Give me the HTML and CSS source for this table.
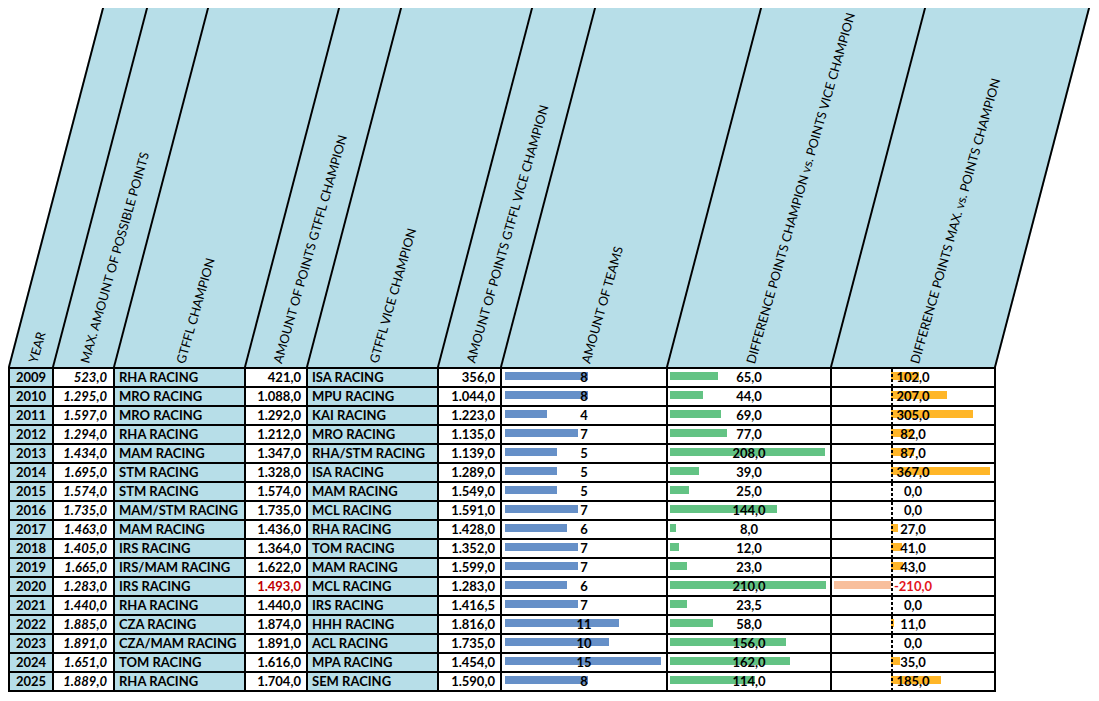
FILE: index.html
```html
<!DOCTYPE html>
<html>
<head>
<meta charset="utf-8">
<link rel="stylesheet" href="styles.css">
</head>
<body>
<div class="sheet">
  <div class="head">
    <div class="hc"><span>YEAR</span></div>
    <div class="hc"><span>MAX. AMOUNT OF POSSIBLE POINTS</span></div>
    <div class="hc"><span>GTFFL CHAMPION</span></div>
    <div class="hc"><span>AMOUNT OF POINTS GTFFL CHAMPION</span></div>
    <div class="hc"><span>GTFFL VICE CHAMPION</span></div>
    <div class="hc"><span>AMOUNT OF POINTS GTFFL VICE CHAMPION</span></div>
    <div class="hc"><span>AMOUNT OF TEAMS</span></div>
    <div class="hc"><span>DIFFERENCE POINTS CHAMPION vs. POINTS VICE CHAMPION</span></div>
    <div class="hc"><span>DIFFERENCE POINTS MAX. vs. POINTS CHAMPION</span></div>
  </div>
  <div class="grid">
    <div class="c yr">2009</div><div class="c mx">523,0</div><div class="c nm">RHA RACING</div><div class="c pt">421,0</div><div class="c nm">ISA RACING</div><div class="c pt">356,0</div><div class="c bt" style="--w:83px">8</div><div class="c bd" style="--w:48px">65,0</div><div class="c bm" style="--w:28px">102,0</div>
    <div class="c yr">2010</div><div class="c mx">1.295,0</div><div class="c nm">MRO RACING</div><div class="c pt">1.088,0</div><div class="c nm">MPU RACING</div><div class="c pt">1.044,0</div><div class="c bt" style="--w:83px">8</div><div class="c bd" style="--w:33px">44,0</div><div class="c bm" style="--w:56px">207,0</div>
    <div class="c yr">2011</div><div class="c mx">1.597,0</div><div class="c nm">MRO RACING</div><div class="c pt">1.292,0</div><div class="c nm">KAI RACING</div><div class="c pt">1.223,0</div><div class="c bt" style="--w:42px">4</div><div class="c bd" style="--w:51px">69,0</div><div class="c bm" style="--w:82px">305,0</div>
    <div class="c yr">2012</div><div class="c mx">1.294,0</div><div class="c nm">RHA RACING</div><div class="c pt">1.212,0</div><div class="c nm">MRO RACING</div><div class="c pt">1.135,0</div><div class="c bt" style="--w:73px">7</div><div class="c bd" style="--w:57px">77,0</div><div class="c bm" style="--w:22px">82,0</div>
    <div class="c yr">2013</div><div class="c mx">1.434,0</div><div class="c nm">MAM RACING</div><div class="c pt">1.347,0</div><div class="c nm">RHA/STM RACING</div><div class="c pt">1.139,0</div><div class="c bt" style="--w:52px">5</div><div class="c bd" style="--w:155px">208,0</div><div class="c bm" style="--w:23px">87,0</div>
    <div class="c yr">2014</div><div class="c mx">1.695,0</div><div class="c nm">STM RACING</div><div class="c pt">1.328,0</div><div class="c nm">ISA RACING</div><div class="c pt">1.289,0</div><div class="c bt" style="--w:52px">5</div><div class="c bd" style="--w:29px">39,0</div><div class="c bm" style="--w:99px">367,0</div>
    <div class="c yr">2015</div><div class="c mx">1.574,0</div><div class="c nm">STM RACING</div><div class="c pt">1.574,0</div><div class="c nm">MAM RACING</div><div class="c pt">1.549,0</div><div class="c bt" style="--w:52px">5</div><div class="c bd" style="--w:19px">25,0</div><div class="c bm" style="--w:0px">0,0</div>
    <div class="c yr">2016</div><div class="c mx">1.735,0</div><div class="c nm">MAM/STM RACING</div><div class="c pt">1.735,0</div><div class="c nm">MCL RACING</div><div class="c pt">1.591,0</div><div class="c bt" style="--w:73px">7</div><div class="c bd" style="--w:107px">144,0</div><div class="c bm" style="--w:0px">0,0</div>
    <div class="c yr">2017</div><div class="c mx">1.463,0</div><div class="c nm">MAM RACING</div><div class="c pt">1.436,0</div><div class="c nm">RHA RACING</div><div class="c pt">1.428,0</div><div class="c bt" style="--w:62px">6</div><div class="c bd" style="--w:6px">8,0</div><div class="c bm" style="--w:7px">27,0</div>
    <div class="c yr">2018</div><div class="c mx">1.405,0</div><div class="c nm">IRS RACING</div><div class="c pt">1.364,0</div><div class="c nm">TOM RACING</div><div class="c pt">1.352,0</div><div class="c bt" style="--w:73px">7</div><div class="c bd" style="--w:9px">12,0</div><div class="c bm" style="--w:11px">41,0</div>
    <div class="c yr">2019</div><div class="c mx">1.665,0</div><div class="c nm">IRS/MAM RACING</div><div class="c pt">1.622,0</div><div class="c nm">MAM RACING</div><div class="c pt">1.599,0</div><div class="c bt" style="--w:73px">7</div><div class="c bd" style="--w:17px">23,0</div><div class="c bm" style="--w:12px">43,0</div>
    <div class="c yr">2020</div><div class="c mx">1.283,0</div><div class="c nm">IRS RACING</div><div class="c pt red">1.493,0</div><div class="c nm">MCL RACING</div><div class="c pt">1.283,0</div><div class="c bt" style="--w:62px">6</div><div class="c bd" style="--w:156px">210,0</div><div class="c bm neg" style="--w:57px">-210,0</div>
    <div class="c yr">2021</div><div class="c mx">1.440,0</div><div class="c nm">RHA RACING</div><div class="c pt">1.440,0</div><div class="c nm">IRS RACING</div><div class="c pt">1.416,5</div><div class="c bt" style="--w:73px">7</div><div class="c bd" style="--w:17px">23,5</div><div class="c bm" style="--w:0px">0,0</div>
    <div class="c yr">2022</div><div class="c mx">1.885,0</div><div class="c nm">CZA RACING</div><div class="c pt">1.874,0</div><div class="c nm">HHH RACING</div><div class="c pt">1.816,0</div><div class="c bt" style="--w:114px">11</div><div class="c bd" style="--w:43px">58,0</div><div class="c bm" style="--w:3px">11,0</div>
    <div class="c yr">2023</div><div class="c mx">1.891,0</div><div class="c nm">CZA/MAM RACING</div><div class="c pt">1.891,0</div><div class="c nm">ACL RACING</div><div class="c pt">1.735,0</div><div class="c bt" style="--w:104px">10</div><div class="c bd" style="--w:116px">156,0</div><div class="c bm" style="--w:0px">0,0</div>
    <div class="c yr">2024</div><div class="c mx">1.651,0</div><div class="c nm">TOM RACING</div><div class="c pt">1.616,0</div><div class="c nm">MPA RACING</div><div class="c pt">1.454,0</div><div class="c bt" style="--w:156px">15</div><div class="c bd" style="--w:120px">162,0</div><div class="c bm" style="--w:9px">35,0</div>
    <div class="c yr">2025</div><div class="c mx">1.889,0</div><div class="c nm">RHA RACING</div><div class="c pt">1.704,0</div><div class="c nm">SEM RACING</div><div class="c pt">1.590,0</div><div class="c bt" style="--w:83px">8</div><div class="c bd" style="--w:85px">114,0</div><div class="c bm" style="--w:50px">185,0</div>
  </div>
</div>
</body>
</html>
```
FILE: styles.css
```css
* { box-sizing: border-box; }
body {
  margin: 0;
  background: #fff;
  color: #000;
  font-family: "Lato", "Liberation Sans", sans-serif;
}
.sheet {
  width: 1099px;
  padding: 8px 0 0 8px;
}
.head, .grid {
  display: grid;
  grid-template-columns: 44px 61px 131px 62px 131px 63px 166px 164px 164px;
  width: 988px;
  border-left: 2px solid #000;
}
.head {
  height: 359px;
  grid-template-rows: 359px;
  background: #b7dee8;
  transform: skewX(-14.68deg);
  transform-origin: 0 100%;
}
.hc {
  min-height: 0;
  border-right: 2px solid #000;
  display: flex;
  flex-direction: column;
  justify-content: flex-end;
  align-items: center;
  padding-bottom: 4px;
}
.hc span {
  flex: none;
  writing-mode: vertical-rl;
  white-space: nowrap;
  font-size: 12.6px;
  line-height: 15px;
  transform-origin: 50% 100%;
  transform: skewX(14.68deg) rotate(16deg) rotate(180deg) translateY(100%);
}
.grid {
  border-top: 2px solid #000;
  grid-auto-rows: 19px;
}
.c {
  border-right: 2px solid #000;
  border-bottom: 2px solid #000;
  font-weight: bold;
  font-size: 13px;
  line-height: 17px;
  white-space: nowrap;
  overflow: hidden;
}
.yr { background: #b7dee8; text-align: center; }
.mx { text-align: right; font-style: italic; padding-right: 6px; }
.nm { background: #b7dee8; padding-left: 4px; }
.pt { text-align: right; padding-right: 5px; }
.red { color: #c00000; }
.bt {
  text-align: center;
  background: linear-gradient(#6690c8, #6690c8) no-repeat 3px 3px / var(--w) 8px;
}
.bd {
  text-align: center;
  background: linear-gradient(#63c384, #63c384) no-repeat 2px 3px / var(--w) 8px;
}
.bm {
  text-align: center;
  background:
    repeating-linear-gradient(#000 0 3px, transparent 3px 5px) no-repeat 59px 0 / 2px 100%,
    linear-gradient(#ffb628, #ffb628) no-repeat 59px 3px / var(--w) 8px;
}
.bm.neg {
  color: #e3161c;
  background:
    repeating-linear-gradient(#000 0 3px, transparent 3px 5px) no-repeat 59px 0 / 2px 100%,
    linear-gradient(#f8bf9c, #f8bf9c) no-repeat calc(59px - var(--w)) 3px / var(--w) 8px;
}
```
